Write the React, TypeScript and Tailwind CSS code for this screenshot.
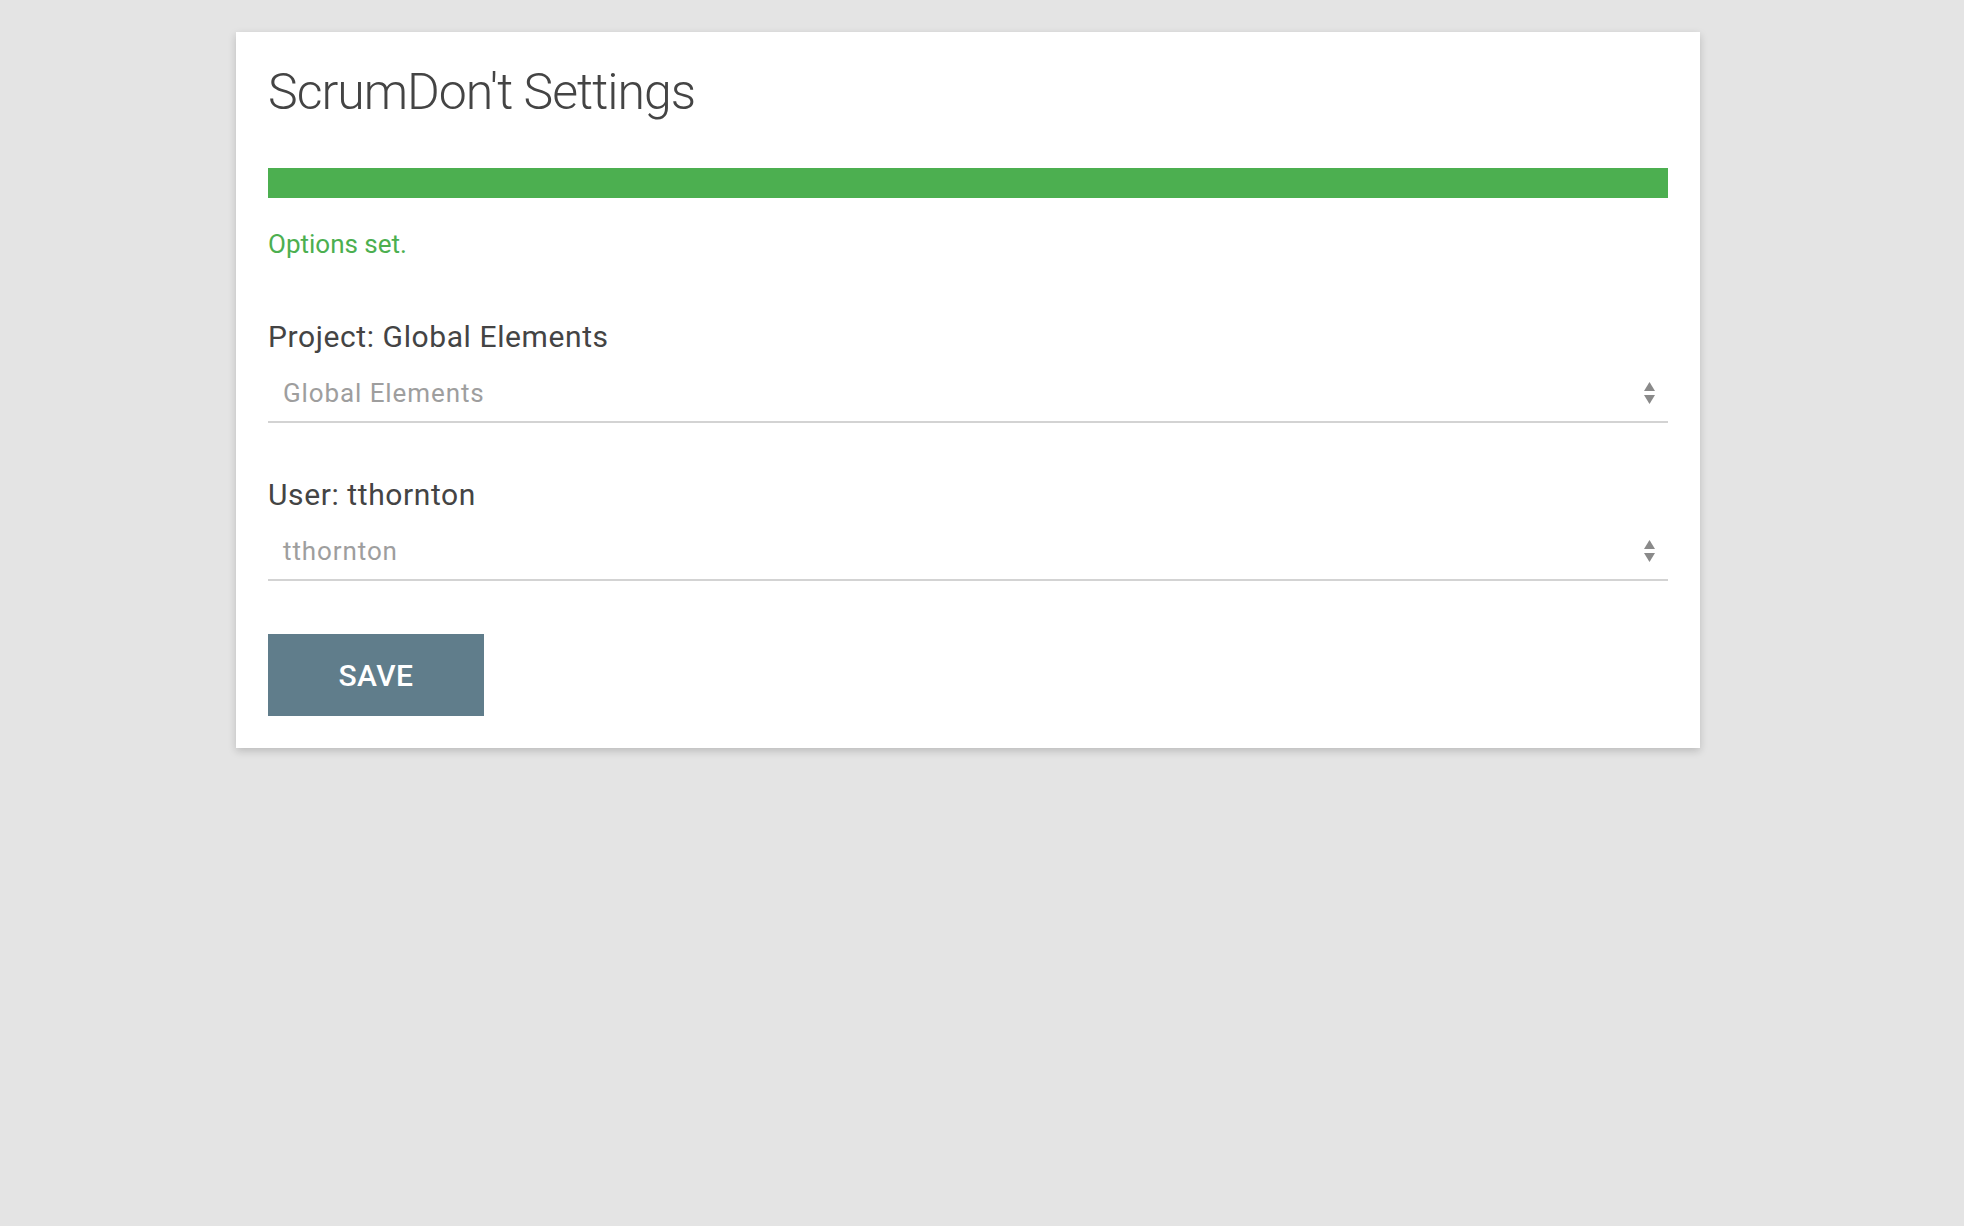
const SelectArrows = () => (
  <svg width="13" height="24" viewBox="0 0 13 24" className="shrink-0">
    <path d="M6.5 1 L12 10 L1 10 Z" fill="#8a8a8a" />
    <path d="M1 14 L12 14 L6.5 23 Z" fill="#8a8a8a" />
  </svg>
);

const Field = ({ label, value }: { label: string; value: string }) => (
  <div className="flex flex-col">
    <label className="text-[30px] leading-[36px] tracking-[0.6px] text-[#444444]">{label}</label>
    <div className="flex h-[68px] items-center justify-between border-b-2 border-[#d3d3d3] pl-[15px] pr-[12px] pt-[9px]">
      <span className="text-[26px] leading-[30px] tracking-[0.9px] text-[#9e9e9e]">{value}</span>
      <SelectArrows />
    </div>
  </div>
);

const App = () => {
  return (
    <div className="min-h-[1226px] bg-[#e4e4e4] pt-[32px] font-['Roboto','Liberation_Sans',sans-serif]">
      <div className="ml-[236px] w-[1464px] bg-white px-[32px] pt-[30px] pb-[32px] shadow-[0_3px_8px_rgba(0,0,0,0.18)]">
        <h1 className="text-[50px] leading-[60px] font-light tracking-[-1px] text-[#444444]">
          ScrumDon't Settings
        </h1>

        <div className="mt-[46px] h-[30px] bg-[#4caf50]" />

        <p className="mt-[31px] text-[26px] leading-[30px] text-[#4caf50]">Options set.</p>

        <div className="mt-[60px]">
          <Field label="Project: Global Elements" value="Global Elements" />
        </div>

        <div className="mt-[54px]">
          <Field label="User: tthornton" value="tthornton" />
        </div>

        <button className="mt-[53px] flex h-[82px] w-[216px] items-center justify-center bg-[#607d8b] text-[30px] font-medium tracking-[0.5px] text-white">
          SAVE
        </button>
      </div>
    </div>
  );
};

export default App;
